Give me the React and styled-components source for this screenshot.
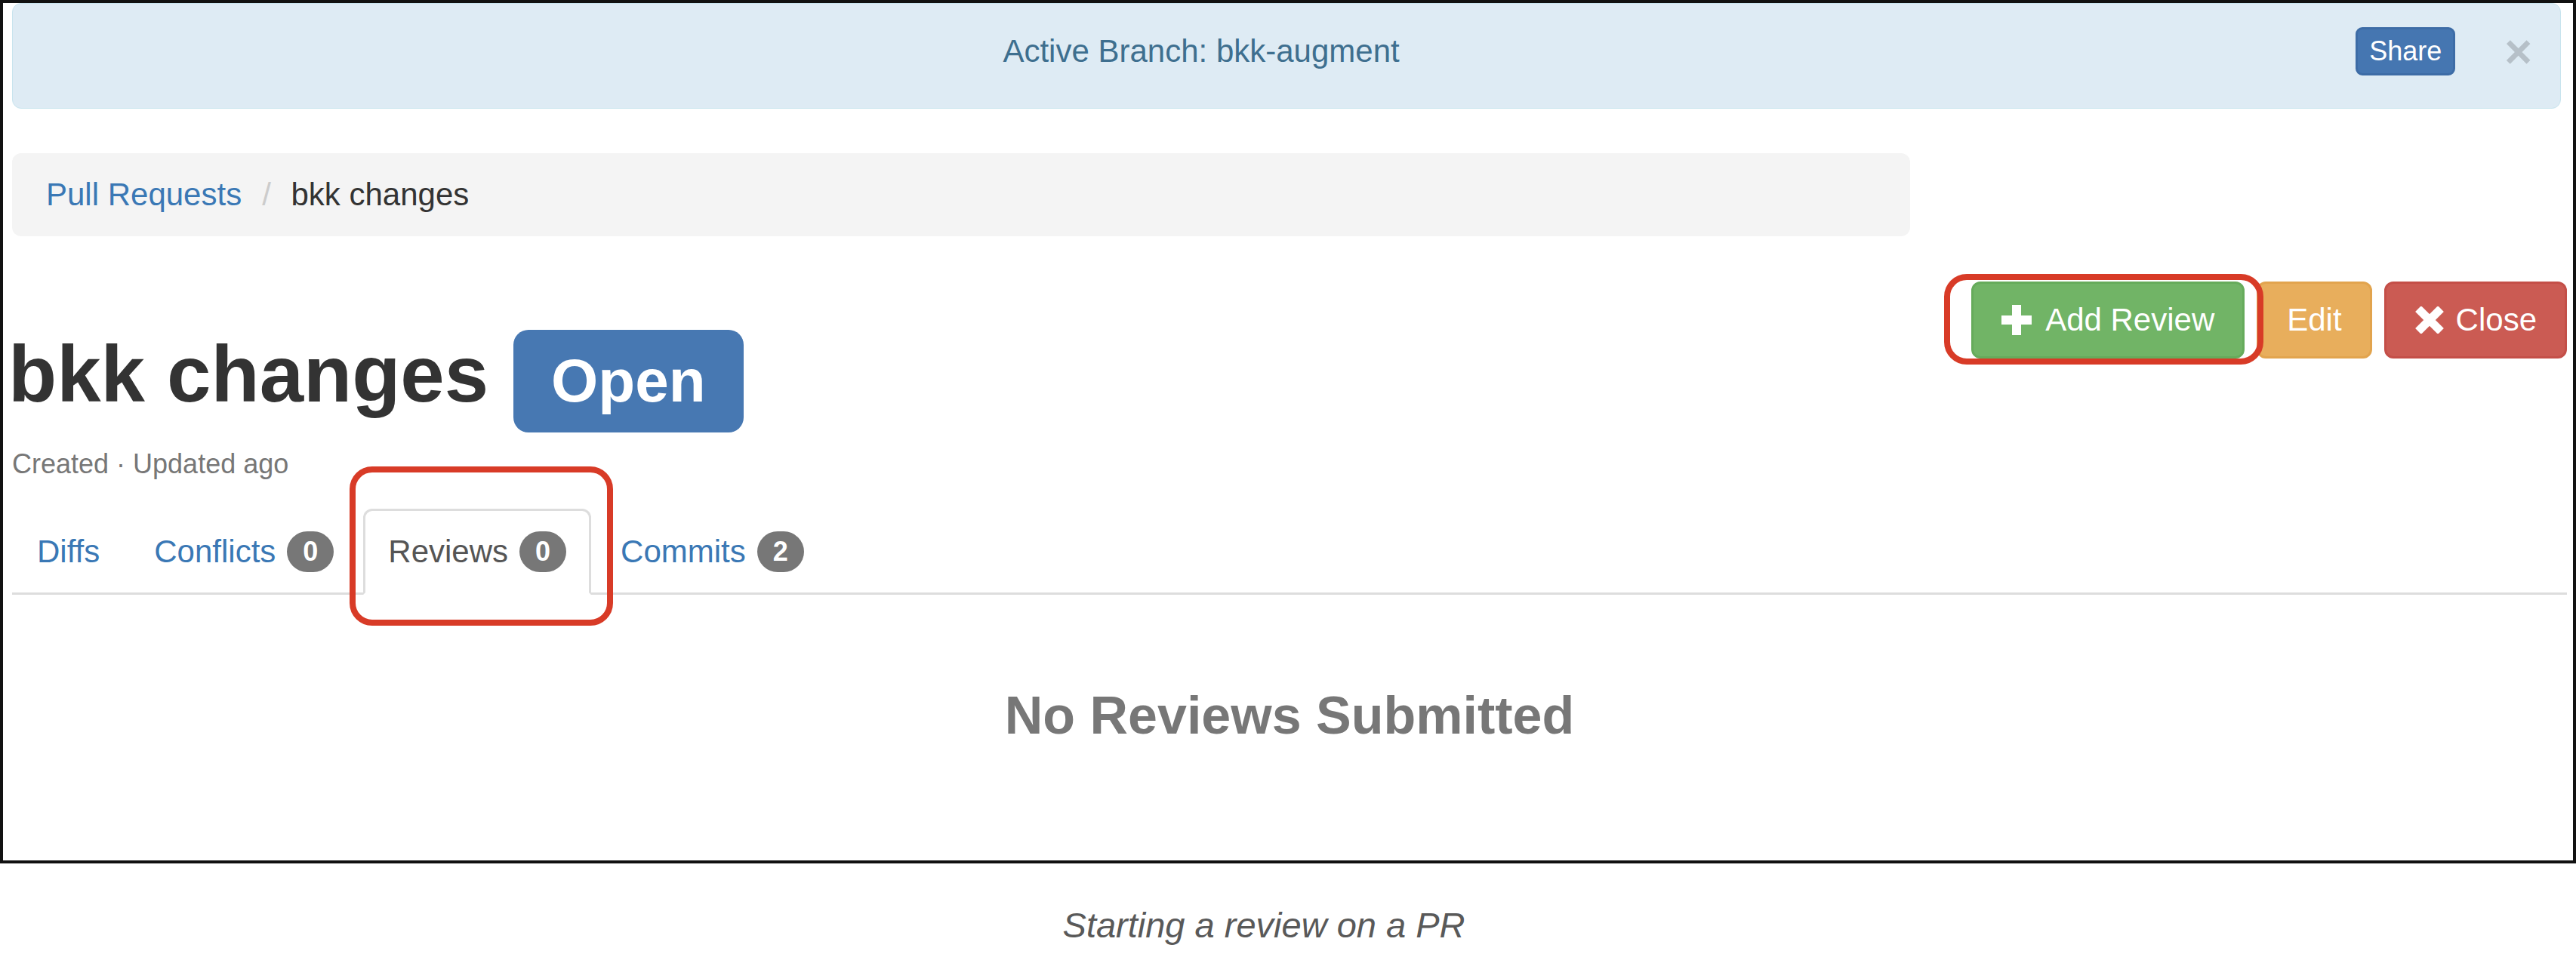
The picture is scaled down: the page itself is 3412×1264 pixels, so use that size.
import React from 'react';
import styled, { createGlobalStyle } from 'styled-components';

const GlobalStyle = createGlobalStyle`
  html, body {
    margin: 0;
    padding: 0;
    background: #fff;
  }
  body {
    font-family: "Liberation Sans", Arial, sans-serif;
    color: #333;
    width: 3412px;
  }
  * {
    box-sizing: border-box;
  }
`

const Frame = styled.div`
  width: 3412px;
  height: 1144px;
  border: 4px solid #111;
  padding: 0 8px 0 12px;
  font-size: 42px;
  line-height: 60px;
`

const Alert = styled.div`
  display: flex;
  align-items: center;
  margin-right: 8px;
  padding: 31px 37px 43px 45px;
  background: #deebf4;
  border: 1px solid #c8e4ee;
  border-radius: 12px;
  color: #3e6f8f;
`

const AlertText = styled.div`
  flex: 1;
  text-align: center;
`

const ShareButton = styled.button`
  font-family: inherit;
  font-size: 36px;
  line-height: 54px;
  padding: 2px 15px;
  color: #fff;
  background: #4576b1;
  border: 3px solid #3d6ca6;
  border-radius: 9px;
`

const Dismiss = styled.span`
  margin-left: 65px;
  font-size: 63px;
  line-height: 1;
  font-weight: bold;
  color: rgba(0, 0, 0, 0.18);
`

const Breadcrumb = styled.ol`
  list-style: none;
  display: flex;
  width: 2514px;
  margin: 59px 0 0;
  padding: 25px 45px;
  background: #f4f4f4;
  border-radius: 12px;
`

const Crumb = styled.li`
  color: ${p => (p.active ? '#333' : '#3a78b5')};

  &:not(:first-child)::before {
    content: "/\\00a0";
    padding: 0 15px;
    margin-left: 12px;
    color: #ccc;
  }
`

const HeaderRow = styled.div`
  display: flex;
  justify-content: space-between;
  align-items: flex-start;
  margin-top: 60px;
`

const TitleBlock = styled.div`
  padding-top: 64px;
`

const Title = styled.h1`
  display: flex;
  align-items: baseline;
  margin: 0 0 0 -5px;
  font-size: 105px;
  line-height: 1.1;
  font-weight: bold;
  color: #333;
`

const StatusLabel = styled.span`
  margin-left: 33px;
  padding: 28px 50px;
  font-size: 80px;
  line-height: 1;
  font-weight: bold;
  color: #fff;
  background: #4778b2;
  border-radius: 20px;
`

const Meta = styled.div`
  margin-top: 15px;
  font-size: 36px;
  line-height: 54px;
  color: #777;
`

const Actions = styled.div`
  display: flex;
  gap: 16px;
`

const colors = {
  success: ['#71b466', '#66ab5b'],
  warning: ['#e8ae5c', '#e2a44e'],
  danger: ['#cb5b53', '#c44f48'],
}

const ActionButton = styled.button`
  position: relative;
  display: flex;
  align-items: center;
  gap: ${p => (p.icon === 'remove' ? 15 : 18)}px;
  padding: 18px 37px;
  font-family: inherit;
  font-size: 42px;
  line-height: 60px;
  color: #fff;
  background: ${p => colors[p.kind][0]};
  border: 3px solid ${p => colors[p.kind][1]};
  border-radius: 12px;

  ${p => p.marked && `
    &::after {
      content: "";
      position: absolute;
      left: -39px;
      right: -28px;
      top: -13px;
      bottom: -11px;
      border: 8px solid #d83b27;
      border-radius: 30px;
      z-index: 2;
      pointer-events: none;
    }
  `}
`

const TabList = styled.ul`
  list-style: none;
  display: flex;
  margin: 32px 0 0;
  padding: 0;
  border-bottom: 3px solid #ddd;
`

const Tab = styled.li`
  position: relative;
  display: flex;
  align-items: center;
  gap: 15px;
  margin: 0 6px -3px 0;
  padding: 24px 30px;
  border: 3px solid transparent;
  border-radius: 12px 12px 0 0;
  color: #3a78b5;

  ${p => p.active && `
    color: #555;
    background: #fff;
    border-color: #ddd #ddd transparent;
  `}

  ${p => p.marked && `
    &::after {
      content: "";
      position: absolute;
      left: -21px;
      right: -32px;
      top: -59px;
      bottom: -44px;
      border: 8px solid #d83b27;
      border-radius: 30px;
      z-index: 2;
      pointer-events: none;
    }
  `}
`

const Count = styled.span`
  padding: 9px 21px;
  font-size: 36px;
  line-height: 1;
  font-weight: bold;
  color: #fff;
  background: #777;
  border-radius: 30px;
`

const EmptyState = styled.h3`
  margin: 122px 0 0;
  text-align: center;
  font-size: 70px;
  line-height: 1.1;
  font-weight: bold;
  color: #777;
`

const Caption = styled.div`
  width: 3348px;
  margin-top: 54px;
  text-align: center;
  font-size: 47px;
  line-height: 1.2;
  font-style: italic;
  color: #595959;
`

function PlusIcon() {
  return (
    <svg width="40" height="40" viewBox="0 0 40 40">
      <path d="M14 0h12v14h14v12H26v14H14V26H0V14h14z" fill="currentColor" />
    </svg>
  )
}

function RemoveIcon() {
  return (
    <svg width="40" height="36" viewBox="0 0 40 36">
      <path d="M5 3L35 33M35 3L5 33" stroke="currentColor" strokeWidth="11" />
    </svg>
  )
}

const tabs = [
  { label: 'Diffs' },
  { label: 'Conflicts', count: 0 },
  { label: 'Reviews', count: 0, active: true },
  { label: 'Commits', count: 2 },
]

export default function App() {
  return (
    <>
      <GlobalStyle />
      <Frame>
        <Alert>
          <AlertText>Active Branch: bkk-augment</AlertText>
          <ShareButton>Share</ShareButton>
          <Dismiss>×</Dismiss>
        </Alert>

        <Breadcrumb>
          <Crumb>Pull Requests</Crumb>
          <Crumb active>bkk changes</Crumb>
        </Breadcrumb>

        <HeaderRow>
          <TitleBlock>
            <Title>
              <span>bkk changes</span>
              <StatusLabel>Open</StatusLabel>
            </Title>
            <Meta>Created · Updated ago</Meta>
          </TitleBlock>

          <Actions>
            <ActionButton kind="success" marked>
              <PlusIcon />
              <span>Add Review</span>
            </ActionButton>
            <ActionButton kind="warning">Edit</ActionButton>
            <ActionButton kind="danger" icon="remove">
              <RemoveIcon />
              <span>Close</span>
            </ActionButton>
          </Actions>
        </HeaderRow>

        <TabList>
          {tabs.map(t => (
            <Tab key={t.label} active={t.active} marked={t.active}>
              <span>{t.label}</span>
              {t.count !== undefined && <Count>{t.count}</Count>}
            </Tab>
          ))}
        </TabList>

        <EmptyState>No Reviews Submitted</EmptyState>
      </Frame>
      <Caption>Starting a review on a PR</Caption>
    </>
  )
}
